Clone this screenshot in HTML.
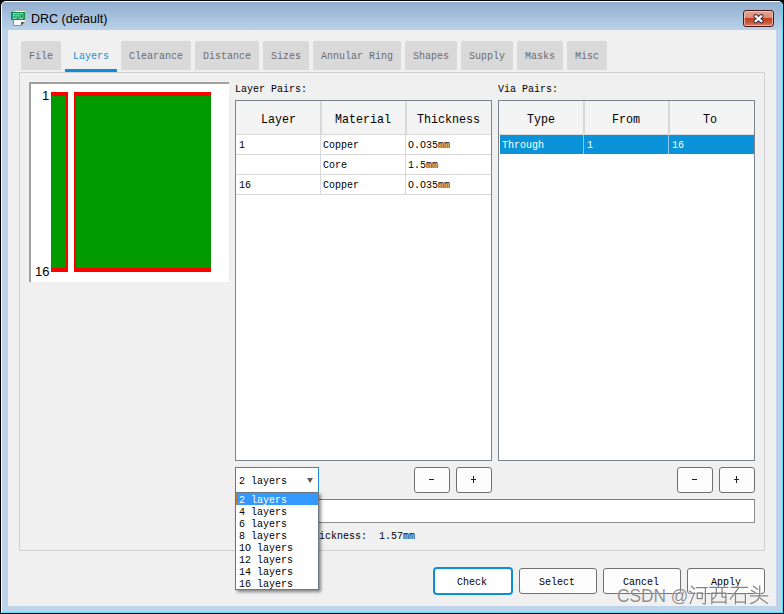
<!DOCTYPE html>
<html><head><meta charset="utf-8">
<style>
html,body{margin:0;padding:0;}
body{width:784px;height:614px;position:relative;overflow:hidden;background:#000;}
div{position:absolute;box-sizing:border-box;}
.m{font-family:"Liberation Mono",monospace;font-size:11.5px;line-height:12px;white-space:pre;transform:scaleX(0.8696);margin-top:-1px;transform-origin:0 0;color:#000;}
.h{font-family:"Liberation Mono",monospace;font-size:13px;line-height:14px;white-space:pre;transform:scaleX(0.8974);transform-origin:0 0;color:#000;}
.tab{top:41px;height:29px;background:#d9d9d9;border-radius:2px 2px 0 0;}
.tabt{top:51px;color:#6d6d6d;}
.btn{background:#fdfdfd;border:1px solid #707070;border-radius:3px;}
</style></head><body>
<!-- frame -->
<div style="left:1px;top:1px;width:782px;height:612px;background:#fff;border-radius:5px 5px 0 0;"></div>
<div style="left:2px;top:2px;width:781px;height:611px;background:#5ad8f8;border-radius:4px 4px 0 0;"></div>
<div style="left:2px;top:2px;width:780px;height:610px;background:#bcd3ea;border-radius:4px 4px 0 0;"></div>
<div style="left:2px;top:2px;width:780px;height:28px;background:linear-gradient(#92aecf,#b9d2ea);border-radius:4px 4px 0 0;"></div>
<!-- client -->
<div style="left:8px;top:30px;width:768px;height:576px;background:#f0f0f0;"></div>

<!-- title icon -->
<svg style="position:absolute;left:0;top:0;" width="30" height="30" viewBox="0 0 30 30">
<path d="M13 10 H25 V22 L21 26 H13 Z" fill="#fafafa"/>
<path d="M13.5 10 V25.5 H21" fill="none" stroke="#8c8c8c" stroke-width="1"/>
<path d="M13 10.5 H25" stroke="#b0b0b0" stroke-width="1"/>
<path d="M21 22 H25 L21 26 Z" fill="#5a5a5a"/>
<rect x="11" y="12" width="14" height="8" fill="#0a9040"/>
<text x="18" y="19" text-anchor="middle" font-family="Liberation Sans" font-size="8.5" textLength="11" lengthAdjust="spacingAndGlyphs" fill="#d8f2de">BRD</text>
</svg>
<!-- title -->
<div style="left:31px;top:12px;font-family:'Liberation Sans',sans-serif;font-size:12.5px;line-height:15px;color:#000;white-space:pre;">DRC (default)</div>
<!-- close -->
<div style="left:743px;top:10px;width:31px;height:17px;border:1px solid #4a1616;border-radius:3px;background:linear-gradient(#e6a293 0%,#d98b78 45%,#c3401f 50%,#c8553a 75%,#d9836a 100%);box-shadow:inset 0 0 0 1px rgba(255,220,210,0.6);"></div>
<svg style="position:absolute;left:752px;top:13px;" width="13" height="11" viewBox="0 0 13 11"><path d="M3.6 3.2 L9.4 8.2 M9.4 3.2 L3.6 8.2" stroke="#2e2a3a" stroke-width="4.2" stroke-linecap="round"/><path d="M3.6 3.2 L9.4 8.2 M9.4 3.2 L3.6 8.2" stroke="#fff" stroke-width="2.4" stroke-linecap="round"/></svg>

<!-- tabs -->
<div class="tab" style="left:21px;width:40px;"></div>
<div class="tab" style="left:121px;width:70px;"></div>
<div class="tab" style="left:195px;width:64px;"></div>
<div class="tab" style="left:263px;width:46px;"></div>
<div class="tab" style="left:313px;width:88px;"></div>
<div class="tab" style="left:405px;width:52px;"></div>
<div class="tab" style="left:461px;width:52px;"></div>
<div class="tab" style="left:517px;width:46px;"></div>
<div class="tab" style="left:567px;width:40px;"></div>
<div style="left:65px;top:69px;width:52px;height:3px;background:#0a8fd8;"></div>
<div class="m tabt" style="left:29px;">File</div>
<div class="m tabt" style="left:73px;color:#1a8ed4;">Layers</div>
<div class="m tabt" style="left:129px;">Clearance</div>
<div class="m tabt" style="left:203px;">Distance</div>
<div class="m tabt" style="left:271px;">Sizes</div>
<div class="m tabt" style="left:321px;">Annular Ring</div>
<div class="m tabt" style="left:413px;">Shapes</div>
<div class="m tabt" style="left:469px;">Supply</div>
<div class="m tabt" style="left:525px;">Masks</div>
<div class="m tabt" style="left:575px;">Misc</div>

<!-- pane -->
<div style="left:19px;top:72px;width:746px;height:479px;border:1px solid #d0d0d0;border-radius:1px;"></div>

<!-- preview -->
<div style="left:29px;top:82px;width:200px;height:200px;background:#fff;border-left:2px solid #a0a0a0;border-top:2px solid #a0a0a0;"></div>
<div style="left:51px;top:92px;width:17px;height:180px;background:#f00;"></div>
<div style="left:51px;top:96px;width:15px;height:172px;background:#009900;"></div>
<div style="left:74px;top:92px;width:137px;height:180px;background:#f00;"></div>
<div style="left:76px;top:96px;width:135px;height:172px;background:#009900;"></div>
<div style="left:42px;top:89px;font-family:'Liberation Sans';font-size:13px;line-height:13px;">1</div>
<div style="left:35px;top:265px;font-family:'Liberation Sans';font-size:13px;line-height:13px;">16</div>

<!-- layer pairs -->
<div class="m" style="left:235px;top:84px;color:#000;">Layer Pairs:</div>
<div style="left:235px;top:100px;width:257px;height:361px;background:#fff;border:1px solid #7d8490;"></div>
<div style="left:236px;top:101px;width:255px;height:34px;background:#f4f4f4;border-bottom:1px solid #dadada;"></div>
<div style="left:320px;top:101px;width:2px;height:33px;background:#d8d8d8;"></div>
<div style="left:405px;top:101px;width:2px;height:33px;background:#d8d8d8;"></div>
<div class="h" style="left:261px;top:113px;">Layer</div>
<div class="h" style="left:335px;top:113px;">Material</div>
<div class="h" style="left:417px;top:113px;">Thickness</div>
<div style="left:236px;top:154px;width:255px;height:1px;background:#d8d8d8;"></div>
<div style="left:236px;top:174px;width:255px;height:1px;background:#d8d8d8;"></div>
<div style="left:236px;top:194px;width:255px;height:1px;background:#d8d8d8;"></div>
<div style="left:320px;top:135px;width:1px;height:60px;background:#d8d8d8;"></div>
<div style="left:405px;top:135px;width:1px;height:60px;background:#d8d8d8;"></div>
<div class="m" style="left:239px;top:140px;">1</div>
<div class="m" style="left:323px;top:140px;">Copper</div>
<div class="m" style="left:408px;top:140px;">O.O35mm</div>
<div class="m" style="left:323px;top:160px;">Core</div>
<div class="m" style="left:408px;top:160px;">1.5mm</div>
<div class="m" style="left:239px;top:180px;">16</div>
<div class="m" style="left:323px;top:180px;">Copper</div>
<div class="m" style="left:408px;top:180px;">O.O35mm</div>

<!-- via pairs -->
<div class="m" style="left:498px;top:84px;">Via Pairs:</div>
<div style="left:498px;top:100px;width:257px;height:361px;background:#fff;border:1px solid #7d8490;"></div>
<div style="left:499px;top:101px;width:255px;height:34px;background:#f4f4f4;border-bottom:1px solid #dadada;"></div>
<div style="left:583px;top:101px;width:2px;height:33px;background:#d8d8d8;"></div>
<div style="left:668px;top:101px;width:2px;height:33px;background:#d8d8d8;"></div>
<div class="h" style="left:527px;top:113px;">Type</div>
<div class="h" style="left:612px;top:113px;">From</div>
<div class="h" style="left:703px;top:113px;">To</div>
<div style="left:500px;top:135px;width:254px;height:19px;background:#0a93d9;"></div>
<div style="left:583px;top:135px;width:1px;height:19px;background:#8cc8ea;"></div>
<div style="left:668px;top:135px;width:1px;height:19px;background:#8cc8ea;"></div>
<div class="m" style="left:502px;top:140px;color:#fff;">Through</div>
<div class="m" style="left:587px;top:140px;color:#fff;">1</div>
<div class="m" style="left:672px;top:140px;color:#fff;">16</div>

<!-- +/- buttons -->
<div class="btn" style="left:414px;top:467px;width:36px;height:26px;"></div>
<div class="btn" style="left:456px;top:467px;width:36px;height:26px;"></div>
<div class="btn" style="left:677px;top:467px;width:36px;height:26px;"></div>
<div class="btn" style="left:719px;top:467px;width:36px;height:26px;"></div>
<div style="left:429px;top:479px;width:5px;height:1px;background:#222;"></div>
<div style="left:692px;top:479px;width:5px;height:1px;background:#222;"></div>
<div style="left:471px;top:479px;width:5px;height:1px;background:#222;"></div>
<div style="left:473px;top:476px;width:1px;height:7px;background:#222;"></div>
<div style="left:734px;top:479px;width:5px;height:1px;background:#222;"></div>
<div style="left:736px;top:476px;width:1px;height:7px;background:#222;"></div>

<!-- text field -->
<div style="left:235px;top:499px;width:520px;height:24px;background:#fff;border:1px solid #8c8c8c;border-top-color:#7a7a7a;"></div>
<div class="m" style="left:307px;top:531px;">Thickness:  1.57mm</div>

<!-- combo -->
<div style="left:235px;top:467px;width:84px;height:26px;background:#fff;border:1px solid #1e8fd8;"></div>
<div class="m" style="left:239px;top:476px;">2 layers</div>
<div style="left:307px;top:478px;width:0;height:0;border-left:3px solid transparent;border-right:3px solid transparent;border-top:5px solid #5c5c5c;"></div>

<!-- dropdown -->
<div style="left:235px;top:492px;width:84px;height:98px;background:#fff;border:1px solid #70767e;box-shadow:2px 2px 3px rgba(0,0,0,0.45);"></div>
<div style="left:236px;top:493px;width:82px;height:12px;background:#3399ff;outline:1px dotted #c87a30;outline-offset:-1px;"></div>
<div class="m" style="left:239px;top:495px;color:#fff;">2 layers</div>
<div class="m" style="left:239px;top:507px;">4 layers</div>
<div class="m" style="left:239px;top:519px;">6 layers</div>
<div class="m" style="left:239px;top:531px;">8 layers</div>
<div class="m" style="left:239px;top:543px;">1O layers</div>
<div class="m" style="left:239px;top:555px;">12 layers</div>
<div class="m" style="left:239px;top:567px;">14 layers</div>
<div class="m" style="left:239px;top:579px;">16 layers</div>

<!-- bottom buttons -->
<div style="left:433px;top:567px;width:80px;height:28px;background:#fff;border:2px solid #0a8fd8;border-radius:4px;"></div>
<div class="btn" style="left:519px;top:568px;width:78px;height:26px;"></div>
<div class="btn" style="left:603px;top:568px;width:78px;height:26px;"></div>
<div class="btn" style="left:687px;top:568px;width:78px;height:26px;"></div>
<div class="m" style="left:457px;top:577px;">Check</div>
<div class="m" style="left:539px;top:577px;">Select</div>
<div class="m" style="left:623px;top:577px;">Cancel</div>
<div class="m" style="left:711px;top:577px;">Apply</div>

<!-- watermark -->
<div style="left:617px;top:585.5px;font-family:'Liberation Sans',sans-serif;font-size:19px;line-height:19px;color:rgba(105,105,105,0.75);white-space:pre;transform:scaleX(0.91);transform-origin:0 0;text-shadow:0 0 1px rgba(255,255,255,0.9);">CSDN @</div>
<svg style="position:absolute;left:686px;top:582px;" width="84" height="26" viewBox="0 0 84 26">
<g fill="none" stroke-linecap="round" stroke-linejoin="round">
<g stroke="rgba(255,255,255,0.6)" stroke-width="2.6">
<path d="M5.3 4.2 L8.4 7 M3.4 9 L6.7 11.2 M4.2 21.6 L8.4 10.7 M10.1 5.6 H21.3 M11.2 10.9 H16.3 V16.6 H11.2 Z M19.4 5.6 V21.2 Q19.4 22 18.4 22 L16.9 21.4"/>
<path d="M23.6 5.3 H41.9 M25.8 21.8 V11.2 H39.9 V21.8 M25.8 20.2 H39.9 M30.3 5.6 V12 Q30 15.5 26.2 17.2 M36 5.6 V14.2 Q36 15.2 37 15.2 H39.9"/>
<path d="M45 5.3 H61.6 M52.9 5.6 L44.2 17.1 M49.5 21.9 V11.5 H59.4 V21.9 M49.5 20.2 H59.4"/>
<path d="M67.5 4.2 L71.5 7.3 M65.3 8.4 L69.8 10.7 M73.7 3.9 V13.5 M64.2 13.8 H81.9 M73.7 14 Q72 19.5 64.7 21.6 M74.3 16.3 L81.6 21.6"/>
</g>
<g stroke="rgba(100,100,100,0.8)" stroke-width="1.25">
<path d="M5.3 4.2 L8.4 7 M3.4 9 L6.7 11.2 M4.2 21.6 L8.4 10.7 M10.1 5.6 H21.3 M11.2 10.9 H16.3 V16.6 H11.2 Z M19.4 5.6 V21.2 Q19.4 22 18.4 22 L16.9 21.4"/>
<path d="M23.6 5.3 H41.9 M25.8 21.8 V11.2 H39.9 V21.8 M25.8 20.2 H39.9 M30.3 5.6 V12 Q30 15.5 26.2 17.2 M36 5.6 V14.2 Q36 15.2 37 15.2 H39.9"/>
<path d="M45 5.3 H61.6 M52.9 5.6 L44.2 17.1 M49.5 21.9 V11.5 H59.4 V21.9 M49.5 20.2 H59.4"/>
<path d="M67.5 4.2 L71.5 7.3 M65.3 8.4 L69.8 10.7 M73.7 3.9 V13.5 M64.2 13.8 H81.9 M73.7 14 Q72 19.5 64.7 21.6 M74.3 16.3 L81.6 21.6"/>
</g>
</g>
</svg>
</body></html>
